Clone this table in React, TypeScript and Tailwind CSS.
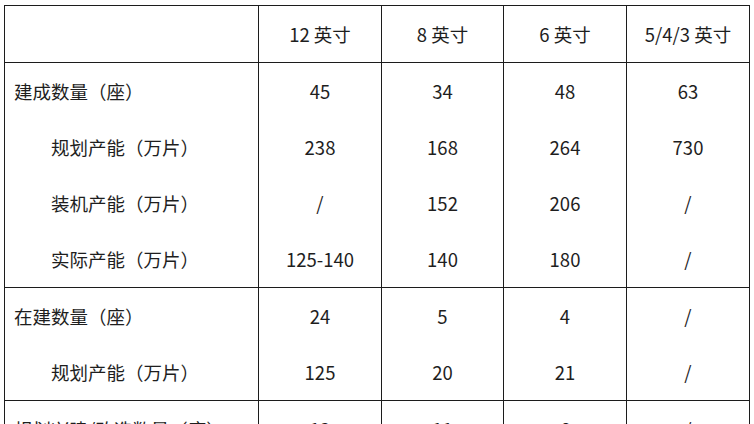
type Line = { label: string; indent?: boolean; values: string[] };

const groups: Line[][] = [
  [
    { label: "建成数量（座）", values: ["45", "34", "48", "63"] },
    { label: "规划产能（万片）", indent: true, values: ["238", "168", "264", "730"] },
    { label: "装机产能（万片）", indent: true, values: ["/", "152", "206", "/"] },
    { label: "实际产能（万片）", indent: true, values: ["125-140", "140", "180", "/"] },
  ],
  [
    { label: "在建数量（座）", values: ["24", "5", "4", "/"] },
    { label: "规划产能（万片）", indent: true, values: ["125", "20", "21", "/"] },
  ],
  [
    { label: "规划兴建/改造数量（座）", values: ["12", "11", "6", "/"] },
    { label: "规划产能（万片）", indent: true, values: ["/", "/", "/", "/"] },
  ],
];

const headers = ["12 英寸", "8 英寸", "6 英寸", "5/4/3 英寸"];

const cell = "border border-[#1c1c1c] p-0 align-top";

export default function App() {
  return (
    <div
      className="h-[424px] overflow-hidden bg-white pl-[4px] pt-[5px] text-[18.5px] text-[#1e1e1e]"
      style={{ fontFamily: '"Noto Sans CJK SC", "Noto Sans", sans-serif' }}
    >
      <table className="w-[745px] table-fixed border-collapse">
        <colgroup>
          <col className="w-[254px]" />
          <col className="w-[123px]" />
          <col className="w-[122px]" />
          <col className="w-[123px]" />
          <col className="w-[123px]" />
        </colgroup>
        <tbody>
          <tr>
            <td className={cell}>
              <div className="h-[56px]" />
            </td>
            {headers.map((h) => (
              <td key={h} className={cell}>
                <div className="flex h-[56px] items-center justify-center pt-[1px]">{h}</div>
              </td>
            ))}
          </tr>
          {groups.map((group, gi) => (
            <tr key={gi}>
              <td className={cell}>
                {group.map((line, li) => (
                  <div
                    key={li}
                    className={`flex h-[56px] items-center pt-[1px] ${line.indent ? "pl-[46px]" : "pl-[9px]"}`}
                  >
                    {line.label}
                  </div>
                ))}
              </td>
              {[0, 1, 2, 3].map((ci) => (
                <td key={ci} className={cell}>
                  {group.map((line, li) => (
                    <div key={li} className="flex h-[56px] items-center justify-center pt-[1px]">
                      {line.values[ci]}
                    </div>
                  ))}
                </td>
              ))}
            </tr>
          ))}
        </tbody>
      </table>
    </div>
  );
}
